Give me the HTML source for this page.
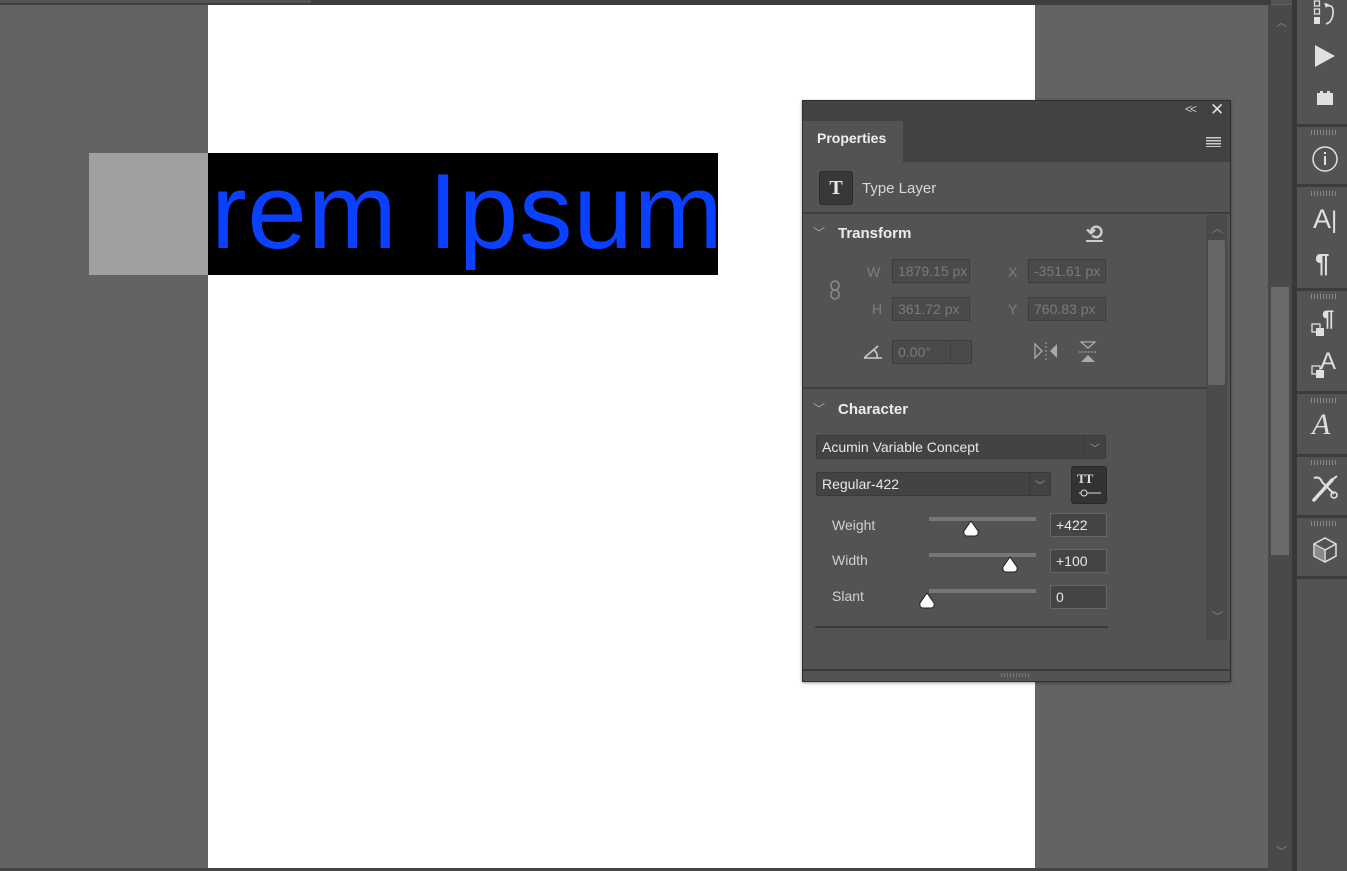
<!DOCTYPE html>
<html><head><style>
*{margin:0;padding:0;box-sizing:border-box}
body{width:1347px;height:871px;background:#636363;position:relative;overflow:hidden;font-family:"Liberation Sans",sans-serif;font-size:14px;color:#d6d6d6}
.a{position:absolute}
.inp{position:absolute;border:1px solid #3e3e3e;background:#4a4a4a;color:#7a7a7a;font-size:14px;padding:2px 5px;height:24px;line-height:18px;overflow:hidden;white-space:nowrap}
.dd{position:absolute;border:1px solid #3a3a3a;background:#434343;color:#e8e8e8;font-size:14px;padding:0 5px;height:24px;line-height:22px;border-radius:2px}
.lbl{position:absolute;color:#7e7e7e;font-size:14px}
.sep{position:absolute;left:1297px;width:50px;height:3px;background:#3c3c3c}
.grip{position:absolute;left:1311px;width:26px;height:5px;background:repeating-linear-gradient(90deg,#888 0 1px,transparent 1px 3px)}
</style></head><body>
<div class="a" style="left:0;top:0;width:1347px;height:4px;background:#535353"></div>
<div class="a" style="left:0;top:3px;width:311px;height:2px;background:#3e3e3e"></div>
<div class="a" style="left:311px;top:0;width:960px;height:5px;background:#3e3e3e"></div>
<div class="a" style="left:208px;top:5px;width:827px;height:863px;background:#fff"></div>
<div class="a" style="left:0;top:868px;width:1268px;height:3px;background:#454545"></div>
<div class="a" style="left:89px;top:153px;width:119px;height:122px;background:#a0a0a0"></div>
<div class="a" style="left:208px;top:153px;width:510px;height:122px;background:#000"></div>
<div class="a" style="left:211px;top:150px;font-size:107px;color:#0a40ff;line-height:122px;letter-spacing:0.8px;white-space:nowrap">rem Ipsum</div>
<div class="a" style="left:1268px;top:5px;width:24px;height:866px;background:#494949"></div>
<div class="a" style="left:1271px;top:287px;width:18px;height:268px;background:#6a6a6a"></div>
<div class="a" style="left:1276px;top:14px;color:#888;font-size:11px">︿</div>
<div class="a" style="left:1276px;top:843px;color:#888;font-size:11px">﹀</div>
<div class="a" style="left:1292px;top:0;width:5px;height:871px;background:#383838"></div>
<div class="a" style="left:1297px;top:0;width:50px;height:871px;background:#535353"></div>
<div class="sep" style="top:124px"></div><div class="sep" style="top:184px"></div><div class="sep" style="top:288px"></div><div class="sep" style="top:391px"></div><div class="sep" style="top:454px"></div><div class="sep" style="top:515px"></div><div class="sep" style="top:576px"></div>
<div class="grip" style="top:130px"></div><div class="grip" style="top:191px"></div><div class="grip" style="top:294px"></div><div class="grip" style="top:398px"></div><div class="grip" style="top:460px"></div><div class="grip" style="top:521px"></div>
<svg class="a" style="left:1310px;top:0" width="30" height="28"><g fill="none" stroke="#e0e0e0" stroke-width="1.3"><rect x="4.5" y="1" width="5" height="5"/><rect x="4.5" y="9" width="5" height="5"/></g><rect x="4" y="17" width="6" height="7" fill="#e0e0e0"/><path d="M17 6 Q24 4 23 14 Q22 22 16 24" fill="none" stroke="#e0e0e0" stroke-width="1.6"/><path d="M14 3 L19 4 L16 8z" fill="#e0e0e0"/></svg>
<svg class="a" style="left:1310px;top:42px" width="30" height="28"><path d="M5 3 L25 14 L5 25z" fill="#e0e0e0"/></svg>
<svg class="a" style="left:1310px;top:86px" width="30" height="24"><path d="M7 7h3v-2h3v2h4v-2h3v2h3v12h-16z" fill="#e0e0e0"/></svg>
<svg class="a" style="left:1310px;top:144px" width="30" height="30"><circle cx="15" cy="15" r="12" fill="none" stroke="#e0e0e0" stroke-width="1.5"/><rect x="14" y="12" width="2" height="9" fill="#e0e0e0"/><rect x="14" y="8" width="2" height="2" fill="#e0e0e0"/></svg>
<div class="a" style="left:1313px;top:204px;font-size:27px;color:#e0e0e0">A<span style="font-size:24px;font-weight:100">|</span></div>
<div class="a" style="left:1315px;top:248px;font-size:26px;color:#e0e0e0;font-weight:bold">¶</div>
<svg class="a" style="left:1310px;top:310px" width="30" height="30"><rect x="2" y="14" width="8" height="8" fill="none" stroke="#e0e0e0" stroke-width="1.3"/><rect x="6" y="18" width="8" height="8" fill="#e0e0e0"/></svg>
<div class="a" style="left:1322px;top:306px;font-size:22px;color:#e0e0e0;font-weight:bold">¶</div>
<svg class="a" style="left:1310px;top:352px" width="30" height="30"><rect x="2" y="14" width="8" height="8" fill="none" stroke="#e0e0e0" stroke-width="1.3"/><rect x="6" y="18" width="8" height="8" fill="#e0e0e0"/></svg>
<div class="a" style="left:1320px;top:348px;font-size:24px;color:#e0e0e0">A</div>
<div class="a" style="left:1312px;top:408px;font-size:30px;color:#e0e0e0;font-family:'Liberation Serif',serif;font-style:italic">A</div>
<svg class="a" style="left:1310px;top:472px" width="30" height="32"><path d="M4 28 L22 8" stroke="#e0e0e0" stroke-width="3.5" stroke-linecap="round"/><path d="M4 6 Q10 4 12 10 L24 22" stroke="#e0e0e0" stroke-width="2" fill="none"/><circle cx="24" cy="23" r="3" fill="none" stroke="#e0e0e0" stroke-width="1.6"/><path d="M22 8 L27 4" stroke="#e0e0e0" stroke-width="2"/></svg>
<svg class="a" style="left:1310px;top:535px" width="30" height="32"><path d="M15 3 L26 9 L26 21 L15 27 L4 21 L4 9z" fill="none" stroke="#e0e0e0" stroke-width="1.5"/><path d="M4 9 L15 15 L26 9 M15 15 L15 27" stroke="#e0e0e0" stroke-width="1.5" fill="none"/><path d="M5 10 L14 15 L14 26 L5 21z" fill="#8a8a8a"/></svg>
<div class="a" style="left:802px;top:100px;width:429px;height:582px;background:#535353;border:1px solid #2f2f2f;box-shadow:0 1px 3px rgba(0,0,0,.4)"></div>
<div class="a" style="left:803px;top:101px;width:427px;height:61px;background:#424242"></div>
<div class="a" style="left:1185px;top:102px;color:#ccc;font-size:12px;letter-spacing:-2px">&lt;&lt;</div>
<div class="a" style="left:1210px;top:100px;color:#ddd;font-size:17px">✕</div>
<div class="a" style="left:803px;top:121px;width:100px;height:42px;background:#535353"></div>
<div class="a" style="left:817px;top:130px;font-weight:bold;color:#f0f0f0;font-size:14px">Properties</div>
<div class="a" style="left:1206px;top:137px;width:15px;height:10px;background:repeating-linear-gradient(#ccc 0 1.5px,transparent 1.5px 3px)"></div>
<div class="a" style="left:819px;top:171px;width:34px;height:34px;background:#383838;border:1px solid #2e2e2e;border-radius:3px;color:#e8e8e8;font-family:'Liberation Serif',serif;font-weight:bold;font-size:20px;text-align:center;line-height:32px">T</div>
<div class="a" style="left:862px;top:180px;color:#d8d8d8;font-size:15px">Type Layer</div>
<div class="a" style="left:803px;top:212px;width:427px;height:2px;background:#3e3e3e"></div>
<div class="a" style="left:1206px;top:215px;width:21px;height:425px;background:#4a4a4a"></div>
<div class="a" style="left:1208px;top:240px;width:17px;height:145px;background:#666;border-radius:2px"></div>
<div class="a" style="left:1212px;top:220px;color:#888;font-size:11px">︿</div>
<div class="a" style="left:1212px;top:608px;color:#888;font-size:11px">﹀</div>
<div class="a" style="left:813px;top:224px;color:#aaa;font-size:12px">﹀</div>
<div class="a" style="left:838px;top:225px;font-weight:bold;color:#ececec;font-size:15px">Transform</div>
<div class="a" style="left:1086px;top:220px;color:#ccc;font-size:20px;font-weight:bold;text-decoration:underline">⟲</div>
<div class="lbl" style="left:867px;top:264px">W</div><div class="inp" style="left:892px;top:259px;width:78px">1879.15 px</div>
<div class="lbl" style="left:872px;top:301px">H</div><div class="inp" style="left:892px;top:297px;width:78px">361.72 px</div>
<div class="lbl" style="left:1008px;top:264px">X</div><div class="inp" style="left:1028px;top:259px;width:78px">-351.61 px</div>
<div class="lbl" style="left:1008px;top:301px">Y</div><div class="inp" style="left:1028px;top:297px;width:78px">760.83 px</div>
<svg class="a" style="left:828px;top:280px" width="16" height="22"><g fill="none" stroke="#8a8a8a" stroke-width="1.6"><rect x="3" y="1" width="8" height="9" rx="4"/><rect x="3" y="10" width="8" height="9" rx="4"/></g></svg>
<svg class="a" style="left:862px;top:342px" width="22" height="18"><path d="M2 16 L20 16 M2 16 L16 4 M12 8 Q16 11 15 16" fill="none" stroke="#ccc" stroke-width="1.5"/></svg>
<div class="inp" style="left:892px;top:340px;width:80px"><span>0.00°</span></div>
<div class="a" style="left:950px;top:341px;width:1px;height:22px;background:#3e3e3e"></div>
<svg class="a" style="left:1033px;top:341px" width="26" height="20"><path d="M2 3 L9 10 L2 17z" fill="none" stroke="#aaa" stroke-width="1.3"/><path d="M24 3 L17 10 L24 17z" fill="#aaa"/><path d="M13 1 V19" stroke="#aaa" stroke-dasharray="2 2"/></svg>
<svg class="a" style="left:1077px;top:340px" width="22" height="24"><path d="M4 2 L18 2 L11 8z" fill="none" stroke="#aaa" stroke-width="1.3"/><path d="M4 22 L18 22 L11 15z" fill="#aaa"/><path d="M2 12 H20" stroke="#aaa" stroke-dasharray="2 1"/></svg>
<div class="a" style="left:803px;top:387px;width:404px;height:2px;background:#3e3e3e"></div>
<div class="a" style="left:813px;top:400px;color:#aaa;font-size:12px">﹀</div>
<div class="a" style="left:838px;top:401px;font-weight:bold;color:#ececec;font-size:15px">Character</div>
<div class="dd" style="left:816px;top:435px;width:290px">Acumin Variable Concept</div>
<div class="a" style="left:1084px;top:436px;width:1px;height:22px;background:#3a3a3a"></div>
<div class="a" style="left:1090px;top:440px;color:#999;font-size:10px">﹀</div>
<div class="dd" style="left:816px;top:472px;width:235px">Regular-422</div>
<div class="a" style="left:1029px;top:473px;width:1px;height:22px;background:#3a3a3a"></div>
<div class="a" style="left:1035px;top:477px;color:#999;font-size:10px">﹀</div>
<div class="a" style="left:1071px;top:466px;width:36px;height:38px;background:#333;border:1px solid #2a2a2a;border-radius:3px"></div>
<div class="a" style="left:1077px;top:471px;color:#ddd;font-family:'Liberation Serif',serif;font-weight:bold;font-size:13px;letter-spacing:-1px">TT</div>
<svg class="a" style="left:1078px;top:488px" width="24" height="10"><path d="M1 5 H23" stroke="#ddd"/><circle cx="6" cy="5" r="3" fill="#333" stroke="#ddd"/></svg>
<div class="a" style="left:832px;top:517px;color:#d0d0d0">Weight</div>
<div class="a" style="left:832px;top:552px;color:#d0d0d0">Width</div>
<div class="a" style="left:832px;top:588px;color:#d0d0d0">Slant</div>
<div class="a" style="left:929px;top:517px;width:107px;height:4px;background:#777"></div>
<div class="a" style="left:929px;top:553px;width:107px;height:4px;background:#777"></div>
<div class="a" style="left:929px;top:589px;width:107px;height:4px;background:#777"></div>
<svg class="a" style="left:962px;top:520px" width="18" height="17"><path d="M9 1 L16 11 Q17 16 12 16 L6 16 Q1 16 2 11z" fill="#fff" stroke="#222"/></svg>
<svg class="a" style="left:1001px;top:556px" width="18" height="17"><path d="M9 1 L16 11 Q17 16 12 16 L6 16 Q1 16 2 11z" fill="#fff" stroke="#222"/></svg>
<svg class="a" style="left:918px;top:592px" width="18" height="17"><path d="M9 1 L16 11 Q17 16 12 16 L6 16 Q1 16 2 11z" fill="#fff" stroke="#222"/></svg>
<div class="inp" style="left:1050px;top:513px;width:57px;background:#454545;border-color:#666;color:#e8e8e8">+422</div>
<div class="inp" style="left:1050px;top:549px;width:57px;background:#454545;border-color:#666;color:#e8e8e8">+100</div>
<div class="inp" style="left:1050px;top:585px;width:57px;background:#454545;border-color:#666;color:#e8e8e8">0</div>
<div class="a" style="left:815px;top:626px;width:293px;height:2px;background:#3a3a3a"></div>
<div class="a" style="left:803px;top:669px;width:427px;height:2px;background:#3a3a3a"></div>
<div class="a" style="left:1001px;top:673px;width:30px;height:4px;background:repeating-linear-gradient(90deg,#777 0 1px,transparent 1px 3px)"></div>
</body></html>
